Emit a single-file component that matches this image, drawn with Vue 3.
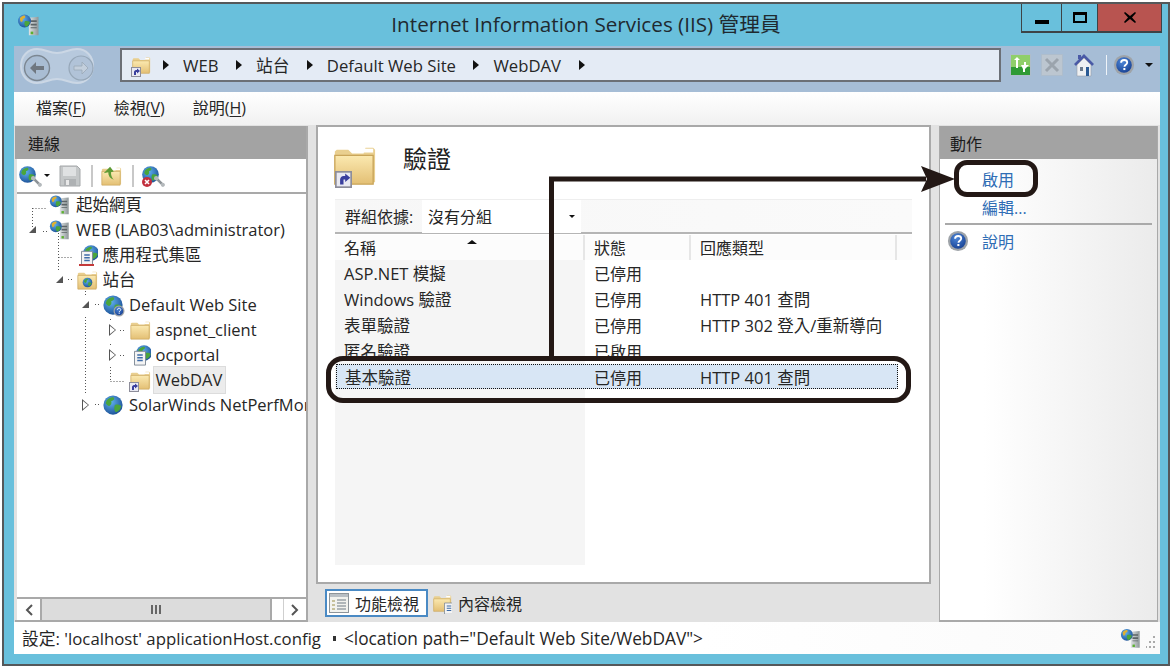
<template>
  <div class="window">
    <svg class="defs" width="0" height="0">
      <defs>
        <linearGradient id="g-folder" x1="0" y1="0" x2="0" y2="1">
          <stop offset="0" stop-color="#fbe9b0" />
          <stop offset="1" stop-color="#e3bf74" />
        </linearGradient>
        <radialGradient id="g-globe" cx="0.4" cy="0.35" r="0.75">
          <stop offset="0" stop-color="#5fb0ee" />
          <stop offset="1" stop-color="#16488f" />
        </radialGradient>
        <linearGradient id="g-server" x1="0" y1="0" x2="1" y2="0">
          <stop offset="0" stop-color="#dfe3e4" />
          <stop offset="1" stop-color="#8d9698" />
        </linearGradient>
        <radialGradient id="g-help" cx="0.4" cy="0.3" r="0.8">
          <stop offset="0" stop-color="#4c86d8" />
          <stop offset="1" stop-color="#143c8e" />
        </radialGradient>
        <symbol id="i-globe" viewBox="0 0 24 24">
          <circle cx="12" cy="12" r="10.5" fill="url(#g-globe)" />
          <path d="M5 7c3-3 6-4 8-3 1 2-1 3-3 4 1 2 0 4-2 5-2 0-3-2-4-3zM14 12c3-1 5 0 7 1-1 4-3 6-6 7-2-2-2-5-1-8z" fill="#4aa53c" />
        </symbol>
        <symbol id="i-server" viewBox="0 0 24 24">
          <path d="M9 3l11-1v21H9z" fill="url(#g-server)" />
          <path d="M11 6h7v2h-7zM11 10h7v2h-7zM11 14h7v1h-7z" fill="#5c6466" />
          <rect x="11" y="19" width="3" height="3" fill="#5cb030" />
        </symbol>
        <symbol id="i-host" viewBox="0 0 24 24">
          <use href="#i-server" x="4" y="1" width="21" height="23" />
          <circle cx="7.500" cy="8" r="6.500" fill="url(#g-globe)" />
          <path d="M3 5c2-2 4-3 5-2 1 2-1 2-2 3 0 2-1 3-2 3-1-1-1-3-1-4z" fill="#e0b030" />
          <path d="M8 8c2 0 4 0 5 1-1 3-2 4-4 5-2-2-2-4-1-6z" fill="#4aa53c" />
        </symbol>
        <symbol id="i-folder" viewBox="0 0 24 24">
          <path d="M2 5l1-1h6l2 2h6l1-3h4l1 1v17H2z" fill="#e9cf8f" />
          <path d="M2 7h20v15H2z" fill="url(#g-folder)" stroke="#c9a55a" stroke-width=".7" />
          <rect x="17" y="3.5" width="5" height="2" fill="#fff" />
        </symbol>
        <symbol id="i-badge" viewBox="0 0 10 10">
          <rect x=".5" y=".5" width="9" height="9" fill="#e9e9f2" stroke="#8d8d9a" />
          <path d="M3 8V5c0-1 1-2 2-2h1V1.5L9 4 6 6.500V5H5v3z" fill="#3a3f9e" />
        </symbol>
        <symbol id="i-doc" viewBox="0 0 24 24">
          <path d="M6 8h12v15H6z" fill="#f4f4f4" stroke="#7b8794" />
          <path d="M9 12h6M9 15h6M9 18h6" stroke="#3c6ba8" stroke-width="1.400" />
        </symbol>
        <symbol id="i-help" viewBox="0 0 24 24">
          <circle cx="12" cy="12" r="11" fill="#9ea3a8" />
          <circle cx="12" cy="12" r="8.500" fill="url(#g-help)" />
          <path d="M8.800 9.500c0-2 1.500-3 3.400-3s3.300 1 3.300 2.800c0 2.500-3 2.500-3 4.700" fill="none" stroke="#fff" stroke-width="2" />
          <rect x="11.300" y="15.300" width="2.200" height="2.200" fill="#fff" />
        </symbol>
        <symbol id="i-wrench" viewBox="0 0 10 10">
          <path d="M1 1l8 8" stroke="#8c9296" stroke-width="2.400" />
          <circle cx="2" cy="2" r="2" fill="#b4b9bc" />
          <circle cx="8" cy="8" r="1.800" fill="#b4b9bc" />
        </symbol>
      </defs>
    </svg>

    <header class="titlebar">
      <svg class="title-icon"><use href="#i-host" /></svg>
      <div class="title">Internet Information Services (IIS) 管理員</div>
      <div class="caption">
        <div class="cap-btn min"><span></span></div>
        <div class="cap-btn max"><span></span></div>
        <div class="cap-btn close">
          <svg width="12" height="11" viewBox="0 0 12 11"><path d="M1 0l5 4 5-4 1 1-4 4.500 4 4.500-1 1-5-4-5 4-1-1 4-4.500L0 1z" fill="#000" /></svg>
        </div>
      </div>
    </header>

    <div class="client">
      <nav class="navbar">
        <svg class="backfwd" width="76" height="38" viewBox="0 0 76 38">
          <path d="M18 2c8 0 12 4 20 4s12-4 20-4c9 0 16 7 16 17s-7 17-16 17c-8 0-12-4-20-4s-12 4-20 4C9 36 2 29 2 19S9 2 18 2z" fill="#b7c9dd" stroke="#cbd7e5" stroke-width="2" />
          <circle cx="18" cy="21" r="12.500" fill="#a9bdd3" stroke="#7c8792" stroke-width="1.400" />
          <path d="M11 21l6-6v4h8v4h-8v4z" fill="#6f7780" />
          <circle cx="62" cy="21" r="12" fill="#b1c3d8" stroke="#96a7b8" stroke-width="1.200" />
          <path d="M69 21l-6-6v4h-8v4h8v4z" fill="#c3cfdc" stroke="#9aa8b6" stroke-width=".8" />
        </svg>
        <div class="address">
          <span class="shortcut addr-icon">
            <svg class="fill"><use href="#i-folder" /></svg>
            <svg class="badge"><use href="#i-badge" /></svg>
          </span>
          <template v-for="seg in crumbs" :key="seg">
            <i class="crumb-arrow"></i>
            <span class="crumb">{{ seg }}</span>
          </template>
          <i class="crumb-arrow"></i>
        </div>
        <div class="nav-tools">
          <svg class="tool-green" width="21" height="22" viewBox="0 0 21 22">
            <rect x=".5" y=".5" width="20" height="21" fill="#8fcf6a" stroke="#aebdcc" />
            <rect x="1" y="13" width="19" height="8" fill="#2f9a35" />
            <path d="M4 6l3-3 3 3H8v8H6V6zM11 11h3V8h2v3h3l-4 4v3h-2v-3z" fill="#fff" />
          </svg>
          <svg class="tool-x" width="22" height="22" viewBox="0 0 22 22">
            <rect x=".5" y=".5" width="21" height="21" fill="#bcc6d0" stroke="#aebdcc" />
            <path d="M5 5l12 12M17 5L5 17" stroke="#9ba4ad" stroke-width="3" />
          </svg>
          <svg class="tool-home" width="22" height="24" viewBox="0 0 22 24">
            <path d="M11 1L1 11l2 2 8-8 8 8 2-2z" fill="#4a5aa6" />
            <path d="M4 12l7-7 7 7v11H4z" fill="#eef0f2" stroke="#98a0a8" stroke-width=".6" />
            <path d="M5 2h3v4H5z" fill="#4a5aa6" />
            <rect x="7" y="14" width="3" height="4" fill="#6a7a8c" />
            <rect x="13" y="14" width="3" height="9" fill="#2a5a94" />
          </svg>
          <i class="tool-sep"></i>
          <svg class="tool-help" width="22" height="22"><use href="#i-help" /></svg>
          <i class="drop"></i>
        </div>
      </nav>

      <div class="menubar">
        <span v-for="m in menus" :key="m.label" class="menu-item">{{ m.label }}(<u>{{ m.key }}</u>)</span>
      </div>

      <div class="main">
        <section class="conn">
          <div class="pane-head">連線</div>
          <div class="conn-tools">
            <span class="globe-tool">
              <svg class="fill"><use href="#i-globe" /></svg>
              <svg class="wrench"><use href="#i-wrench" /></svg>
            </span>
            <i class="drop small"></i>
            <svg class="floppy" width="22" height="22" viewBox="0 0 22 22">
              <path d="M1 1h17l3 3v17H1z" fill="#c4c7c8" stroke="#a5a8aa" />
              <rect x="4" y="2" width="13" height="9" fill="#dfe1e2" />
              <rect x="5" y="14" width="12" height="7" fill="#aeb1b3" />
              <rect x="7" y="15" width="3" height="5" fill="#e8e8e8" />
            </svg>
            <i class="tool-divider"></i>
            <svg class="up" width="22" height="22" viewBox="0 0 24 24">
              <use href="#i-folder" />
              <path d="M4 9l7-7 4 5-3 1c0 4 1 6 3 8-4-1-6-4-6-8z" fill="#5d9a34" />
            </svg>
            <i class="tool-divider"></i>
            <span class="globe-tool">
              <svg class="fill"><use href="#i-globe" /></svg>
              <svg class="wrench"><use href="#i-wrench" /></svg>
              <svg class="stop" viewBox="0 0 10 10">
                <circle cx="5" cy="5" r="5" fill="#c22f3d" />
                <path d="M3 3l4 4M7 3L3 7" stroke="#fff" stroke-width="1.600" />
              </svg>
            </span>
          </div>
          <div class="tree">
            <svg class="tree-lines" width="290" height="230">
              <path d="M15.500 14v20M15.500 14.500H30M26 37.500h4M41.500 39v37M41.500 63.500H56M51 85.500h4M68.500 97v6M78 110.500h4M68.500 123v77M103 136.500h6M103 161.500h6M93.500 125v3M93.500 150v3M93.500 173v15M93.500 187.500H108M78 210.500h4" fill="none" stroke="#555" stroke-dasharray="1 2" />
            </svg>
            <div
              v-for="node in tree"
              :key="node.label"
              class="tree-row"
              :style="{ paddingLeft: node.depth * 26.500 + 'px' }"
            >
              <i class="expander" :class="node.state"></i>
              <span class="tree-icon shortcut">
                <template v-if="node.icon === 'host'"><svg class="fill"><use href="#i-host" /></svg></template>
                <template v-else-if="node.icon === 'pool'">
                  <svg class="fill"><use href="#i-globe" x="6" y="0" width="18" height="18" /></svg>
                  <svg class="fill"><use href="#i-doc" /></svg>
                  <i class="pool-base"></i>
                </template>
                <template v-else-if="node.icon === 'sites'">
                  <svg class="fill"><use href="#i-folder" /></svg>
                  <svg class="mini-globe"><use href="#i-globe" /></svg>
                </template>
                <template v-else-if="node.icon === 'default'">
                  <svg class="fill"><use href="#i-globe" /></svg>
                  <svg class="mini-help"><use href="#i-help" /></svg>
                </template>
                <template v-else-if="node.icon === 'globe'"><svg class="fill"><use href="#i-globe" /></svg></template>
                <template v-else-if="node.icon === 'app'">
                  <svg class="fill"><use href="#i-globe" x="6" y="0" width="18" height="18" /></svg>
                  <svg class="fill"><use href="#i-doc" /></svg>
                </template>
                <template v-else>
                  <svg class="fill"><use href="#i-folder" /></svg>
                  <svg v-if="node.icon === 'vdir'" class="badge"><use href="#i-badge" /></svg>
                </template>
              </span>
              <span class="tree-label" :class="{ selected: node.selected }">{{ node.label }}</span>
            </div>
          </div>
          <div class="hscroll">
            <div class="sb-btn"><svg width="10" height="12" viewBox="0 0 10 12"><path d="M8 1L3 6l5 5" fill="none" stroke="#555" stroke-width="2" /></svg></div>
            <div class="sb-thumb"><i></i><i></i><i></i></div>
            <div class="sb-track"></div>
            <div class="sb-btn right"><svg width="10" height="12" viewBox="0 0 10 12"><path d="M2 1l5 5-5 5" fill="none" stroke="#555" stroke-width="2" /></svg></div>
          </div>
        </section>

        <section class="center">
          <div class="feature">
            <div class="feature-head">
              <span class="shortcut head-icon">
                <svg class="fill"><use href="#i-folder" /></svg>
                <svg class="badge"><use href="#i-badge" /></svg>
              </span>
              <h1>驗證</h1>
            </div>
            <div class="listing">
              <div class="group-row">
                <span class="group-label">群組依據:</span>
                <div class="group-select">沒有分組<i class="drop small"></i></div>
              </div>
              <div class="col-head">
                <div>名稱<i class="sort"></i></div>
                <div>狀態</div>
                <div>回應類型</div>
                <div></div>
              </div>
              <div class="rows">
                <div v-for="row in rows" :key="row.name" class="row" :class="{ current: row.current }">
                  <div class="cell-name">{{ row.name }}</div>
                  <div class="cell-status">{{ row.status }}</div>
                  <div>{{ row.type }}</div>
                </div>
              </div>
            </div>
          </div>
          <div class="tabs">
            <div class="tab active">
              <svg width="20" height="20" viewBox="0 0 20 20">
                <rect x=".5" y=".5" width="19" height="19" fill="#f2f2ee" stroke="#8d9499" />
                <path d="M1 1h18v3H1z" fill="#b9bfc4" />
                <path d="M3 7h3v2H3zM3 11h3v2H3zM3 15h3v2H3z" fill="#c6c09a" />
                <path d="M8 7h9M8 10h9M8 13h9M8 16h9" stroke="#6f7a84" />
              </svg>
              功能檢視
            </div>
            <div class="tab">
              <span class="tab-icon">
                <svg class="fill"><use href="#i-folder" /></svg>
                <svg class="fill"><use href="#i-doc" x="8" y="4" width="18" height="20" /></svg>
              </span>
              內容檢視
            </div>
          </div>
        </section>

        <aside class="actions">
          <div class="pane-head">動作</div>
          <div class="action-body">
            <a class="action first">啟用</a>
            <a class="action">編輯...</a>
            <div class="action-sep"></div>
            <a class="action help">
              <svg width="22" height="22"><use href="#i-help" /></svg>
              說明
            </a>
          </div>
        </aside>
      </div>

      <footer class="status">
        <span class="status-cfg">設定: 'localhost' applicationHost.config</span>
        <i class="status-arrow"></i>
        <span class="status-path">&lt;location path="Default Web Site/WebDAV"&gt;</span>
        <span class="status-end">
          <svg width="22" height="23"><use href="#i-host" /></svg>
          <svg class="grip" width="9" height="14" viewBox="0 0 9 14" fill="#aaa">
            <rect x="7" y="0" width="2" height="2" /><rect x="7" y="5" width="2" height="2" /><rect x="7" y="10" width="2" height="2" />
            <rect x="3" y="5" width="2" height="2" /><rect x="3" y="10" width="2" height="2" /><rect x="-1" y="10" width="2" height="2" />
          </svg>
        </span>
      </footer>
    </div>

    <!-- callouts drawn on top of the screenshot -->
    <div class="callout callout-row"></div>
    <div class="callout callout-action"></div>
    <svg class="callout-arrow" width="420" height="200" viewBox="0 0 420 200">
      <path d="M5.500 190V13H380" fill="none" stroke="#231815" stroke-width="5" />
      <path d="M375 0l34 13-34 13 6-13z" fill="#231815" />
    </svg>
  </div>
</template>

<script setup>
const crumbs = ['WEB', '站台', 'Default Web Site', 'WebDAV']

const menus = [
  { label: '檔案', key: 'F' },
  { label: '檢視', key: 'V' },
  { label: '說明', key: 'H' }
]

const tree = [
  { label: '起始網頁', depth: 0, state: '', icon: 'host' },
  { label: 'WEB (LAB03\\administrator)', depth: 0, state: 'open', icon: 'host' },
  { label: '應用程式集區', depth: 1, state: '', icon: 'pool' },
  { label: '站台', depth: 1, state: 'open', icon: 'sites' },
  { label: 'Default Web Site', depth: 2, state: 'open', icon: 'default' },
  { label: 'aspnet_client', depth: 3, state: 'closed', icon: 'folder' },
  { label: 'ocportal', depth: 3, state: 'closed', icon: 'app' },
  { label: 'WebDAV', depth: 3, state: '', icon: 'vdir', selected: true },
  { label: 'SolarWinds NetPerfMonitor', depth: 2, state: 'closed', icon: 'globe' }
]

const rows = [
  { name: 'ASP.NET 模擬', status: '已停用', type: '' },
  { name: 'Windows 驗證', status: '已停用', type: 'HTTP 401 查問' },
  { name: '表單驗證', status: '已停用', type: 'HTTP 302 登入/重新導向' },
  { name: '匿名驗證', status: '已啟用', type: '' },
  { name: '基本驗證', status: '已停用', type: 'HTTP 401 查問', current: true }
]
</script>

<style>
html, body {
  margin: 0;
  background: #fff;
}
</style>

<style scoped>
.window {
  position: relative;
  box-sizing: border-box;
  width: 1168px;
  height: 664px;
  margin: 2px 0 0 2px;
  padding: 0 8px 10px 10px;
  border: 2px solid #55585a;
  background: #69c0dc;
  font-family: "Open Sans", "Noto Sans CJK TC", sans-serif;
  font-size: 16.500px;
  color: #262626;
  overflow: hidden;
}
.defs {
  position: absolute;
}
.fill {
  position: absolute;
  inset: 0;
  width: 100%;
  height: 100%;
}
.titlebar {
  display: grid;
  grid-template-columns: 1fr auto 1fr;
  align-items: start;
  height: 42px;
  margin-right: -2px;
  padding-left: 3px;
}
.title-icon {
  width: 24px;
  height: 24px;
  margin-top: 9px;
}
.title {
  margin: 6px 0 0 -7px;
  font-size: 20.700px;
  line-height: 28px;
  color: #1f2a30;
}
.caption {
  justify-self: end;
  display: flex;
  height: 29px;
  border: solid #3d4346;
  border-width: 0 1px 2px 1px;
  box-sizing: border-box;
}
.cap-btn {
  display: flex;
  align-items: center;
  justify-content: center;
  height: 100%;
}
.cap-btn.min {
  width: 39px;
  border-right: 1px solid #3d4346;
}
.cap-btn.min span {
  width: 14px;
  height: 4px;
  margin-top: 8px;
  background: #000;
}
.cap-btn.max {
  width: 35px;
}
.cap-btn.max span {
  box-sizing: border-box;
  width: 14px;
  height: 11px;
  border: 2px solid #000;
  border-top-width: 3px;
}
.cap-btn.close {
  width: 63px;
  background: #b85450;
  border-left: 1px solid #3d4346;
}
.client {
  display: flex;
  flex-direction: column;
  height: 608px;
  background: #e2e2e2;
}
.navbar {
  display: flex;
  align-items: center;
  height: 46px;
  padding: 0 0 0 5px;
  background: #a6bdd6;
  box-sizing: border-box;
}
.backfwd {
  flex: none;
  margin-top: -6px;
}
.address {
  flex: none;
  box-sizing: border-box;
  display: flex;
  align-items: center;
  width: 881px;
  height: 34px;
  margin: -8px 0 0 25px;
  padding-left: 9px;
  border: 2px solid #6b6f76;
  background: #e4ebf5;
  font-size: 16.700px;
}
.addr-icon {
  width: 20px;
  height: 22px;
  margin-right: 12px;
}
.crumb {
  margin: 0 17.500px 0 14px;
  white-space: nowrap;
}
.crumb-arrow {
  flex: none;
  width: 0;
  height: 0;
  border-left: 6px solid #111;
  border-top: 5px solid transparent;
  border-bottom: 5px solid transparent;
}
.nav-tools {
  display: flex;
  align-items: center;
  margin: -8px 0 0 9px;
}
.tool-x {
  margin-left: 10px;
}
.tool-home {
  margin-left: 10px;
}
.tool-sep {
  width: 1px;
  height: 20px;
  margin: 0 6px 0 11px;
  background: #eef3f8;
}
.drop {
  width: 0;
  height: 0;
  margin-left: 10px;
  border-top: 4px solid #111;
  border-left: 4px solid transparent;
  border-right: 4px solid transparent;
}
.drop.small {
  margin-left: 2px;
  border-width: 3px 3.500px 0;
}
.menubar {
  display: flex;
  align-items: center;
  flex: none;
  gap: 28px;
  height: 33px;
  padding: 0 0 3px 22px;
  background: linear-gradient(#fff, #f1f1f1);
  box-sizing: border-box;
  font-size: 16px;
}
.menu-item u {
  text-underline-offset: 2px;
}
.main {
  display: flex;
  flex: 1;
  min-height: 0;
}
.pane-head {
  display: flex;
  align-items: center;
  flex: none;
  height: 33px;
  padding-left: 10px;
  background: #a3a3a3;
  color: #1c1c1c;
  font-size: 16px;
  box-sizing: border-box;
}
.conn {
  display: flex;
  flex-direction: column;
  flex: none;
  box-sizing: border-box;
  width: 293px;
  margin: 1px 0 0 1px;
  border-right: 2px solid #a9a9a9;
  border-bottom: 2px solid #a9a9a9;
}
.conn .pane-head {
  padding-left: 13px;
}
.conn-tools {
  display: flex;
  align-items: center;
  flex: none;
  height: 33px;
  margin-left: 2px;
  padding-left: 1px;
  background: #fff;
  border-bottom: 2px solid #a9a9a9;
  box-sizing: content-box;
}
.globe-tool {
  position: relative;
  display: inline-block;
  width: 24px;
  height: 22px;
}
.globe-tool .fill {
  width: 19px;
  height: 19px;
}
.wrench {
  position: absolute;
  right: 0;
  bottom: 0;
  width: 11px;
  height: 11px;
}
.stop {
  position: absolute;
  left: 1px;
  bottom: 0;
  width: 10px;
  height: 10px;
}
.floppy {
  margin-left: 9px;
}
.tool-divider {
  width: 2px;
  height: 22px;
  margin: 0 7px 0 10px;
  background: #c8c8c8;
}
.tree {
  position: relative;
  flex: 1;
  min-height: 0;
  margin-left: 2px;
  background: #fff;
  overflow: hidden;
}
.tree-lines {
  position: absolute;
  top: 0;
  left: 0;
}
.tree-row {
  position: relative;
  display: flex;
  align-items: center;
  height: 25px;
  white-space: nowrap;
}
.tree-row:first-of-type {
  margin-top: -2px;
}
.expander {
  flex: none;
  width: 8px;
  height: 8px;
  margin-left: 12px;
  margin-right: 10px;
  box-sizing: border-box;
}
.expander.open {
  width: 0;
  height: 0;
  border-bottom: 7px solid #555;
  border-left: 7px solid transparent;
  margin-right: 11px;
}
.expander.closed {
  width: 0;
  height: 0;
  position: relative;
  border-left: 7px solid #555;
  border-top: 6px solid transparent;
  border-bottom: 6px solid transparent;
  margin-right: 11px;
}
.expander.closed::after {
  content: "";
  position: absolute;
  left: -6px;
  top: -4px;
  border-left: 5px solid #fff;
  border-top: 4px solid transparent;
  border-bottom: 4px solid transparent;
}
.shortcut {
  position: relative;
  display: inline-block;
  flex: none;
}
.tree-icon {
  width: 22px;
  height: 22px;
  margin-left: 2px;
}
.badge {
  position: absolute;
  left: 0;
  bottom: -1px;
  width: 10px;
  height: 10px;
}
.mini-globe {
  position: absolute;
  left: 6px;
  top: 8px;
  width: 11px;
  height: 11px;
}
.mini-help {
  position: absolute;
  right: -1px;
  bottom: -1px;
  width: 12px;
  height: 12px;
}
.pool-base {
  position: absolute;
  left: 3px;
  bottom: 0;
  width: 15px;
  height: 2px;
  background: #c43a3a;
}
.tree-label {
  margin-left: 3px;
  padding: 1px 3px 2px 2px;
}
.tree-label.selected {
  background: #ececec;
  outline: 1px solid #dcdcdc;
}
.hscroll {
  display: flex;
  flex: none;
  height: 21px;
  margin-left: 2px;
  background: #fff;
  border-top: 2px solid #a9a9a9;
}
.sb-btn {
  display: flex;
  align-items: center;
  justify-content: center;
  flex: none;
  width: 23px;
}
.sb-btn.right {
  border-left: 1px solid #cfcfcf;
  width: 22px;
}
.sb-thumb {
  display: flex;
  align-items: center;
  justify-content: center;
  gap: 2px;
  box-sizing: border-box;
  width: 232px;
  background: #dcdcdc;
  border-left: 2px solid #a9a9a9;
  border-right: 2px solid #a9a9a9;
}
.sb-thumb i {
  width: 2px;
  height: 9px;
  background: #666;
}
.sb-track {
  flex: 1;
}
.center {
  display: flex;
  flex-direction: column;
  flex: none;
  width: 615px;
  margin-left: 8px;
}
.feature {
  flex: 1;
  min-height: 0;
  box-sizing: border-box;
  padding: 0 17px 16px 17px;
  background: #fff;
  border: 2px solid #a9a9a9;
}
.feature-head {
  display: flex;
  align-items: flex-start;
  height: 72px;
  box-sizing: border-box;
}
.head-icon {
  width: 46px;
  height: 48px;
  margin: 14px 0 0 -4px;
}
.head-icon .badge {
  width: 17px;
  height: 17px;
  left: 4px;
  bottom: 1px;
}
h1 {
  margin: 13px 0 0 26px;
  font-size: 24px;
  font-weight: 400;
  color: #222;
}
.listing {
  display: flex;
  flex-direction: column;
  height: 366px;
  background: #fff;
  font-size: 16.500px;
}
.group-row {
  display: flex;
  align-items: center;
  flex: none;
  height: 35px;
  background: linear-gradient(90deg, #f7f7f7, #fafafa);
  border-top: 1px solid #eee;
  border-bottom: 2px solid #b5b5b5;
  box-sizing: border-box;
  font-size: 16px;
}
.group-label {
  width: 87px;
  padding-left: 10px;
  box-sizing: border-box;
}
.group-select {
  display: flex;
  align-items: center;
  justify-content: space-between;
  box-sizing: border-box;
  width: 159px;
  height: 33px;
  padding: 0 6px 0 6px;
  background: #fff;
}
.col-head,
.row {
  display: grid;
  grid-template-columns: 250px 106px 206px 1fr;
  align-items: center;
}
.col-head {
  flex: none;
  height: 26px;
  padding-top: 1px;
  border-bottom: 2px solid #e8e8e8;
  box-sizing: border-box;
  background: #fff;
  font-size: 16px;
}
.col-head > div {
  position: relative;
  height: 25px;
  line-height: 27px;
  padding-left: 9px;
  box-sizing: border-box;
  border-right: 2px solid #e6e6e6;
  background: #fcfcfc;
}
.col-head > div:last-child {
  border-right: 0;
}
.sort {
  position: absolute;
  left: 132px;
  top: 5px;
  border-bottom: 4px solid #111;
  border-left: 5px solid transparent;
  border-right: 5px solid transparent;
}
.rows {
  flex: 1;
  background: linear-gradient(90deg, #f5f5f5 250px, #fff 250px);
}
.row {
  height: 26px;
}
.row > div {
  padding-left: 9px;
  white-space: nowrap;
}
.row > .cell-status {
  font-size: 16px;
}
.row.current {
  width: 562px;
  height: 25px;
  margin-left: 1px;
  background: #d8e6f5;
  outline: 1px dotted #111;
  outline-offset: -1px;
  grid-template-columns: 249px 106px 206px 1fr;
}
.tabs {
  display: flex;
  align-items: center;
  flex: none;
  height: 38px;
  padding: 0 0 1px 9px;
  box-sizing: border-box;
  font-size: 16px;
}
.tab {
  display: flex;
  align-items: center;
  gap: 6px;
  height: 28px;
  box-sizing: border-box;
  white-space: nowrap;
}
.tab svg {
  flex: none;
}
.tab.active {
  width: 103px;
  padding-left: 2px;
  border: 2px solid #4a8ac4;
  background: #fff;
}
.tab-icon {
  position: relative;
  display: inline-block;
  width: 20px;
  height: 22px;
  margin-left: 4px;
}
.actions {
  display: flex;
  flex-direction: column;
  flex: none;
  width: 219px;
  margin: 1px 0 0 8px;
  box-sizing: border-box;
  border: solid #a9a9a9;
  border-width: 0 1px 2px 1px;
  font-size: 16px;
}
.action-body {
  flex: 1;
  padding: 6px 5px 0 5px;
  background: linear-gradient(90deg, #fff 20%, #ebebeb);
}
.action {
  display: flex;
  align-items: center;
  height: 28px;
  padding-left: 37px;
  color: #2f6db5;
}
.action-sep {
  height: 2px;
  margin: 2px 0;
  background: #a9a9a9;
}
.action.help {
  padding-left: 2px;
  gap: 13px;
}
.status {
  display: flex;
  align-items: center;
  flex: none;
  height: 32px;
  padding-left: 8px;
  background: linear-gradient(90deg, #fff, #fff 60%, #fafafa);
  box-sizing: border-box;
  white-space: nowrap;
  font-size: 16.800px;
}
.status-path {
  font-size: 17.300px;
}
.status-arrow {
  width: 3px;
  height: 5px;
  margin: 0 8px 0 12px;
  background: #333;
}
.status-end {
  display: flex;
  align-items: flex-end;
  margin-left: auto;
  margin-right: 5px;
}
.status-end .grip {
  margin-left: 4px;
}
.callout {
  position: absolute;
  box-sizing: border-box;
  border: 5px solid #231815;
}
.callout-row {
  left: 322px;
  top: 352px;
  width: 585px;
  height: 47px;
  border-radius: 17px;
}
.callout-action {
  left: 950px;
  top: 156px;
  width: 84px;
  height: 37px;
  border-radius: 13px;
}
.callout-arrow {
  position: absolute;
  left: 542px;
  top: 162px;
}
</style>
